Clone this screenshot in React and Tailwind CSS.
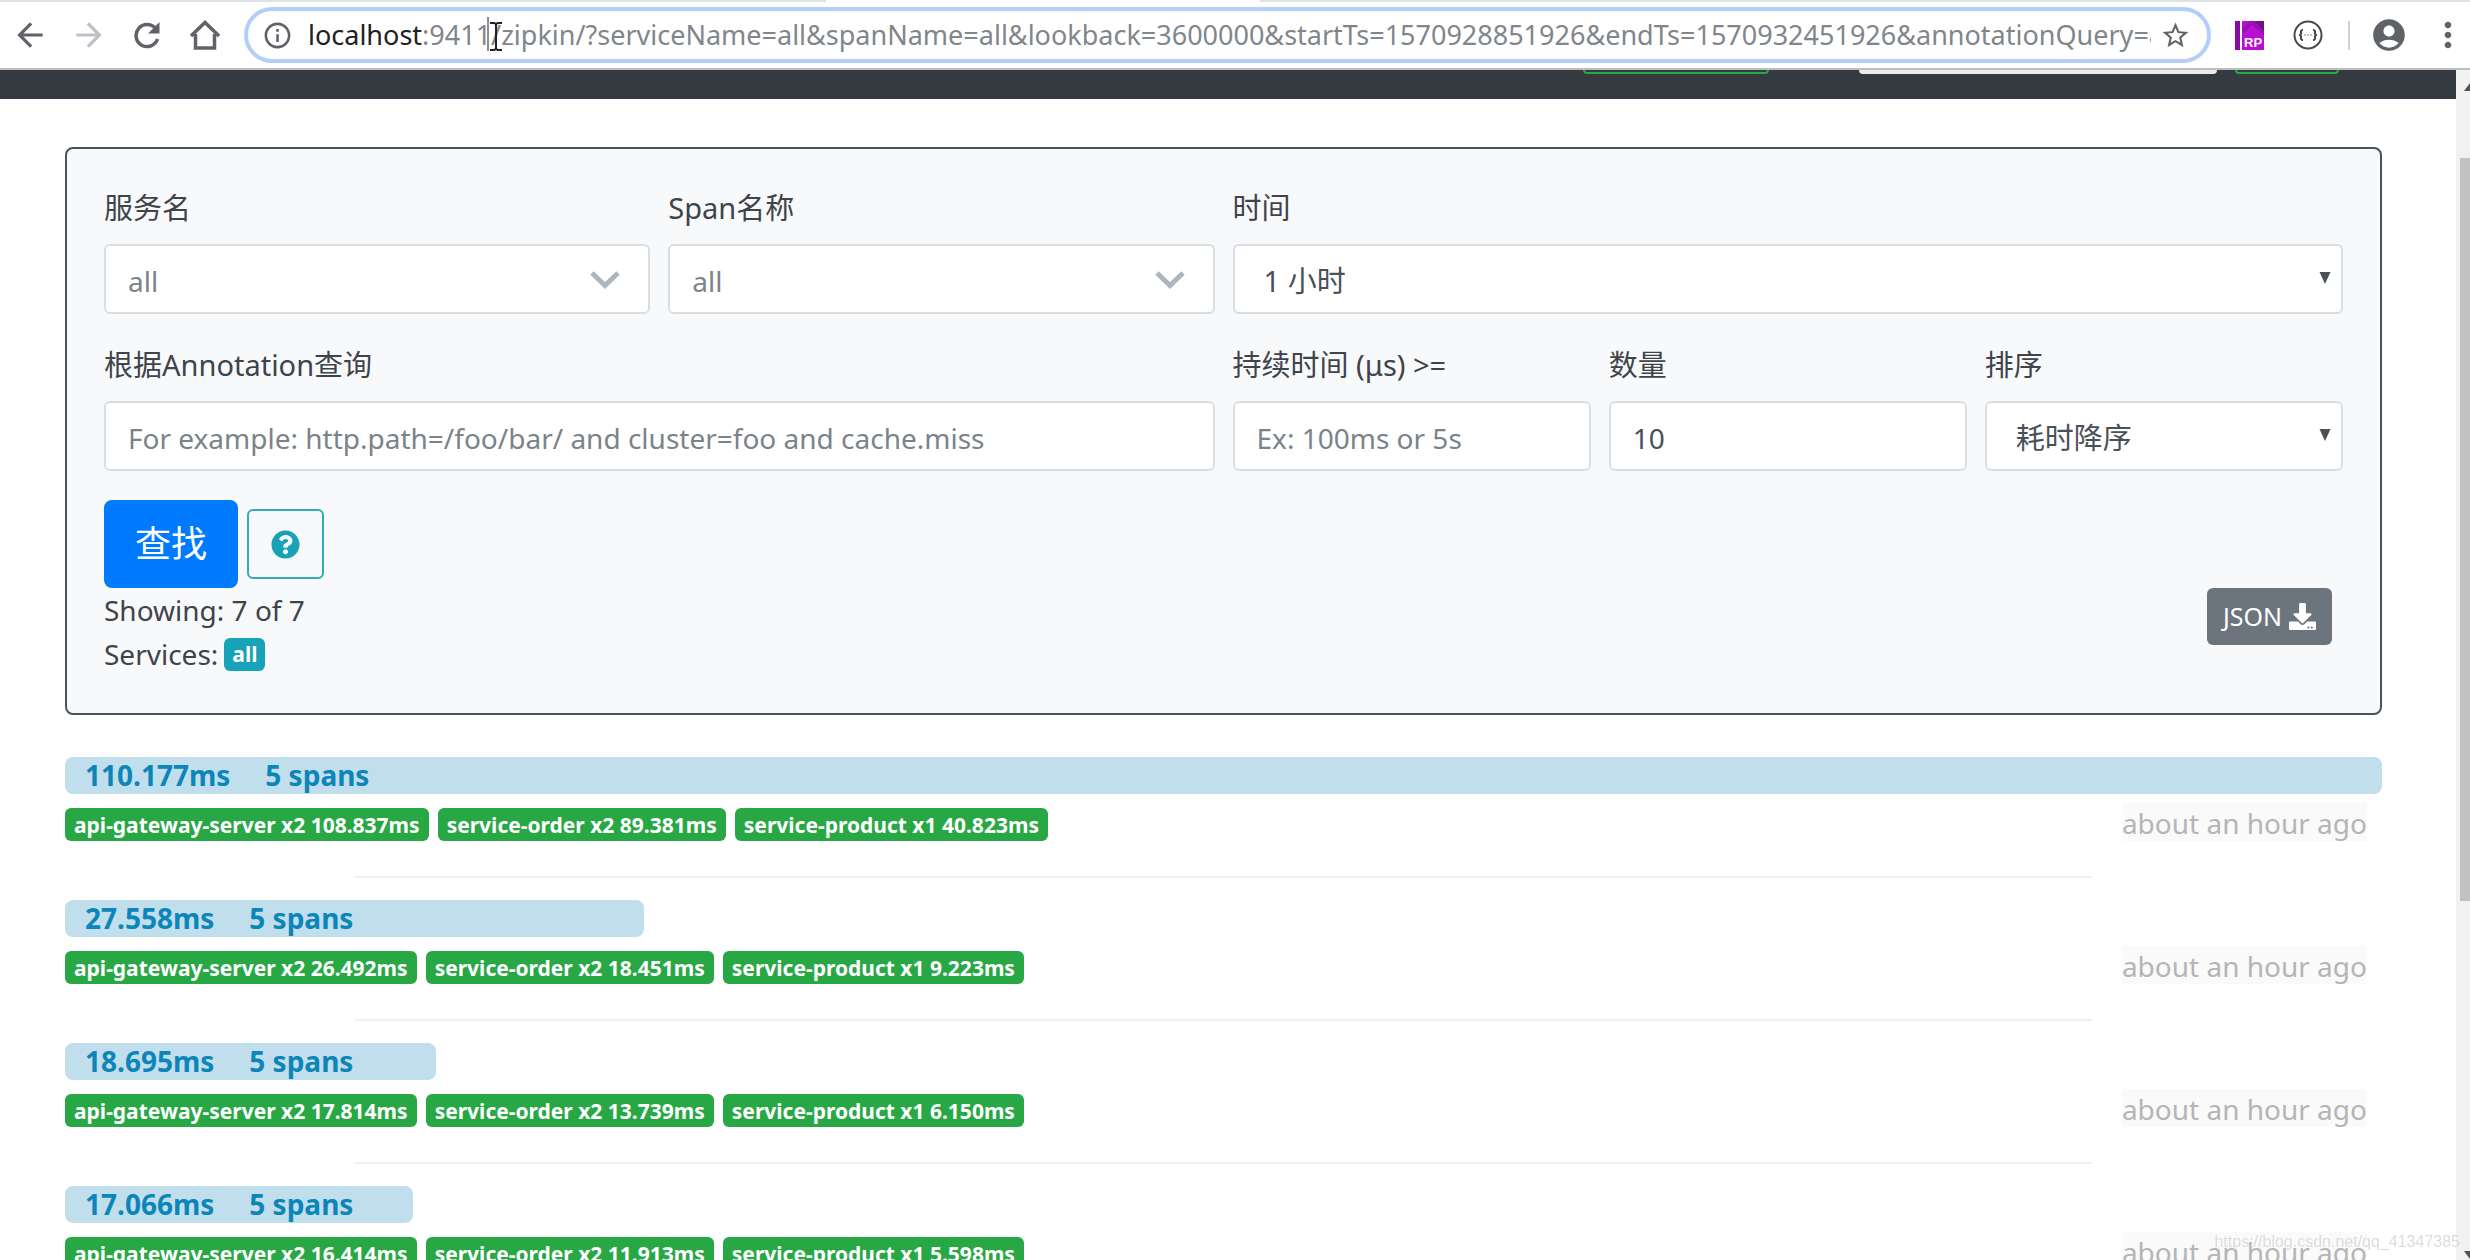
import React from "react";
import { MdArrowBack, MdArrowForward, MdStarBorder, MdAccountCircle, MdMoreVert, MdInfoOutline } from "react-icons/md";
import { FaQuestionCircle, FaDownload } from "react-icons/fa";

const traces = [
  { duration: "110.177ms", width: "100%", tags: ["api-gateway-server x2 108.837ms", "service-order x2 89.381ms", "service-product x1 40.823ms"] },
  { duration: "27.558ms", width: "25%", tags: ["api-gateway-server x2 26.492ms", "service-order x2 18.451ms", "service-product x1 9.223ms"] },
  { duration: "18.695ms", width: "16%", tags: ["api-gateway-server x2 17.814ms", "service-order x2 13.739ms", "service-product x1 6.150ms"] },
  { duration: "17.066ms", width: "15%", tags: ["api-gateway-server x2 16.414ms", "service-order x2 11.913ms", "service-product x1 5.598ms"] },
];

const control =
  "block h-[70px] w-full rounded-md border-2 border-[#d9dee3] bg-white pt-[3px] leading-[40px] placeholder:text-[#7b838a] outline-none appearance-none";

function Field({ id, label, className, children }) {
  return (
    <div className={className}>
      <label htmlFor={id} className="mb-[14px] block text-[29px] leading-[44px]">{label}</label>
      {children}
    </div>
  );
}

function ChosenSelect({ id }) {
  return (
    <div className="relative">
      <select id={id} className={control + " px-[22px] text-[28px] text-[#7b838a]"}>
        <option>all</option>
      </select>
      <svg viewBox="0 0 30 20" className="pointer-events-none absolute top-[26px] right-[30px] h-5 w-[30px]" fill="none" stroke="#adb5bd" strokeWidth="5">
        <path d="M2 3l13 12.500L28 3" />
      </svg>
    </div>
  );
}

function NativeSelect({ id, value }) {
  return (
    <div className="relative">
      <select id={id} className={control + " px-[29px] text-[29px] text-[#495057]"}>
        <option>{value}</option>
      </select>
      <svg viewBox="0 0 12 12" className="pointer-events-none absolute top-[28px] right-[12px] h-3 w-3" fill="#495057">
        <path d="M0.500 0h11L6 12z" />
      </svg>
    </div>
  );
}

function TextInput(props) {
  return <input {...props} className={control + " px-[22px] text-[28px] text-[#495057]"} />;
}

function Toolbar() {
  return (
    <header className="shrink-0 border-b-2 border-[#bcbec0] bg-white">
      <div className="flex h-[2px] bg-[#dee1e6]">
        <div className="ml-[826px] w-[434px] bg-white" />
      </div>
      <div className="flex h-[66px] items-center text-[#5f6368]">
        <button aria-label="Back" className="ml-[11px] text-[38px]"><MdArrowBack /></button>
        <button aria-label="Forward" className="ml-[21px] text-[38px] text-[#bdc1c6]"><MdArrowForward /></button>
        <button aria-label="Reload" className="ml-[25px]">
          <svg viewBox="0 0 28 28" className="h-[28px] w-[28px]">
            <path d="M22.500 7.500A11 11 0 1 0 24.500 18" fill="none" stroke="currentColor" strokeWidth="3.500" />
            <path d="M26.500 1v11.500H15z" fill="currentColor" />
          </svg>
        </button>
        <button aria-label="Home" className="ml-[29px]">
          <svg viewBox="0 0 30 30" className="h-[30px] w-[30px]" fill="none" stroke="currentColor" strokeWidth="3.500">
            <path d="M1 16L15 2.500L29 16M5.500 14v14h19V14" />
          </svg>
        </button>
        <div className="ml-[24px] flex h-[56px] min-w-0 flex-1 items-center rounded-full border-4 border-[#b3cefb] bg-white">
          <MdInfoOutline className="ml-[14px] shrink-0 text-[31px]" />
          <div className="relative ml-[15px] min-w-0 flex-1 overflow-hidden font-['Noto_Sans'] text-[27px] leading-[44px] whitespace-nowrap text-[#80868b]">
            <span className="text-[#202124]">localhost</span>:9411/zipkin/?serviceName=all&amp;spanName=all&amp;lookback=3600000&amp;startTs=1570928851926&amp;endTs=1570932451926&amp;annotationQuery=&amp;
            <svg viewBox="0 0 16 36" className="absolute top-[4px] left-[179px] h-9 w-4" fill="none" stroke="#202124" strokeWidth="2">
              <path d="M1 0v34" strokeWidth="1" />
              <path d="M3 6h4l2 1l2-1h4M9 7v25M3 33h4l2-1l2 1h4" />
            </svg>
          </div>
          <button aria-label="Bookmark" className="mr-[16px] ml-[9px] text-[31px]"><MdStarBorder /></button>
        </div>
        <svg viewBox="0 0 29 29" className="ml-[24px] h-[29px] w-[29px] shrink-0">
          <path fill="#b80fd0" d="M0 0h29v29H0z" />
          <path fill="#8c0aa4" d="M0 0h5v29H0z" />
          <path fill="#6a148c" d="M17 0h12v14z" />
          <path fill="#9412b4" d="M7 13L17 4l12 10v-4L20 0h-5L7 8z" />
          <path fill="#fff" d="M5 0h2v29H5z" />
          <text x="9" y="26" fill="#fff" fontSize="13" fontWeight="bold" fontFamily="Liberation Sans">RP</text>
        </svg>
        <svg viewBox="0 0 30 30" className="ml-[29px] h-[30px] w-[30px] shrink-0" fill="none" stroke="#4a4a4a" strokeWidth="2">
          <circle cx="15" cy="15" r="13.500" />
          <path d="M10 10q-2.500 0-2 2.500t-2 2.500q2.500 0 2 2.500t2 2.500M20 10q2.500 0 2 2.500t2 2.500q-2.500 0-2 2.500t-2 2.500" />
          <path d="M11.500 15h7" stroke="#8a8a8a" strokeDasharray="1 2" />
        </svg>
        <div className="ml-[25px] h-[29px] w-[2px] shrink-0 bg-[#d0d3d6]" />
        <button aria-label="Profile" className="ml-[20px] text-[38px]"><MdAccountCircle /></button>
        <button aria-label="Menu" className="mr-[2px] ml-[20px] text-[40px]"><MdMoreVert /></button>
      </div>
    </header>
  );
}

function SearchPanel() {
  return (
    <form className="rounded-lg border-2 border-[#4d5257] bg-[#f8f9fb] px-[37px] pt-[37px] pb-[37px]">
      <div className="grid grid-cols-12 gap-x-[18px] gap-y-[29px]">
        <Field id="service" label="服务名" className="col-span-3"><ChosenSelect id="service" /></Field>
        <Field id="span" label="Span名称" className="col-span-3"><ChosenSelect id="span" /></Field>
        <Field id="lookback" label="时间" className="col-span-6"><NativeSelect id="lookback" value="1 小时" /></Field>
        <Field id="annotation" label="根据Annotation查询" className="col-span-6">
          <TextInput id="annotation" placeholder="For example: http.path=/foo/bar/ and cluster=foo and cache.miss" />
        </Field>
        <Field id="duration" label="持续时间 (μs) >=" className="col-span-2">
          <TextInput id="duration" placeholder="Ex: 100ms or 5s" />
        </Field>
        <Field id="limit" label="数量" className="col-span-2">
          <TextInput id="limit" defaultValue="10" />
        </Field>
        <Field id="sort" label="排序" className="col-span-2"><NativeSelect id="sort" value="耗时降序" /></Field>
      </div>
      <div className="mt-[29px] flex items-center gap-[9px]">
        <button type="button" className="h-[88px] rounded-lg bg-[#007bff] px-[31px] text-[36px] text-white">查找</button>
        <button type="button" aria-label="Help" className="flex h-[70px] w-[77px] items-center justify-center rounded-md border-2 border-[#2fabbd] text-[29px] text-[#17a2b8]">
          <FaQuestionCircle />
        </button>
      </div>
      <div className="flex items-start justify-between">
        <div className="leading-[44px]">
          <div>Showing: 7 of 7</div>
          <div className="flex items-center gap-[6px]">
            Services:
            <span className="rounded-md bg-[#17a2b8] px-2 text-[21px] leading-[33px] font-bold text-white">all</span>
          </div>
        </div>
        <button type="button" className="mr-[11px] flex h-[57px] items-center gap-[7px] rounded-md bg-[#6c757d] px-[16px] text-[25px] text-white">
          JSON <FaDownload className="text-[27px]" />
        </button>
      </div>
    </form>
  );
}

function Trace({ duration, width, tags }) {
  return (
    <li className="group">
      <div className="flex h-[37px] items-center gap-[35px] rounded-lg bg-[#c1deed] pl-[20px] leading-[39px] font-bold whitespace-nowrap text-[#0c86b8]" style={{ width }}>
        <span>{duration}</span>
        <span>5 spans</span>
      </div>
      <div className="mt-[9px] flex items-start justify-between">
        <div className="mt-[5px] flex gap-[9px]">
          {tags.map((t) => (
            <span key={t} className="h-[33px] rounded-md bg-[#28a745] px-[9px] text-[21px] leading-[35px] font-bold text-white">{t}</span>
          ))}
        </div>
        <time className="mr-[15px] h-[38px] bg-[#fafafa] leading-[40px] text-[#b5b5b5]">about an hour ago</time>
      </div>
      <hr className="mx-auto mt-[35px] mb-[22px] w-3/4 border-t-2 border-[#f0f0f0] group-last:hidden" />
    </li>
  );
}

export default function App() {
  return (
    <div className="flex h-screen flex-col overflow-hidden bg-white font-['Noto_Sans','Noto_Sans_CJK_SC',sans-serif] text-[28px] text-[#3f444a]">
      <Toolbar />
      <div className="flex min-h-0 flex-1">
        <div className="min-w-0 flex-1 overflow-hidden">
          <nav className="flex h-[29px] justify-end bg-[#343a40] pr-[117px]">
            <div className="h-[4px] w-[186px] rounded-b-md border-2 border-t-0 border-[#28a745]" />
            <div className="ml-[90px] h-[4px] w-[358px] rounded-b-md bg-[#e9ecef]" />
            <div className="ml-[18px] h-[4px] w-[104px] rounded-b-md border-2 border-t-0 border-[#28a745]" />
          </nav>
          <main className="pt-[48px] pr-[74px] pl-[65px]">
            <SearchPanel />
            <ul className="mt-[42px]">
              {traces.map((t) => <Trace key={t.duration} {...t} />)}
            </ul>
          </main>
        </div>
        <div className="flex w-[14px] shrink-0 flex-col items-end overflow-hidden bg-[#f1f1f1]">
          <svg viewBox="0 0 6 8" className="mt-[13px] h-2 w-[6px]" fill="#505050"><path d="M6 0v8H0z" /></svg>
          <div className="mt-[67px] h-[743px] w-[10px] bg-[#c1c1c1]" />
          <svg viewBox="0 0 6 8" className="mt-auto mb-px h-2 w-[6px]" fill="#505050"><path d="M0 0h6v8z" /></svg>
        </div>
      </div>
      <div className="pointer-events-none fixed right-[10px] bottom-[6px] font-['Liberation_Sans'] text-[16px] leading-6 text-[#dcdcdc]">https://blog.csdn.net/qq_41347385</div>
    </div>
  );
}
